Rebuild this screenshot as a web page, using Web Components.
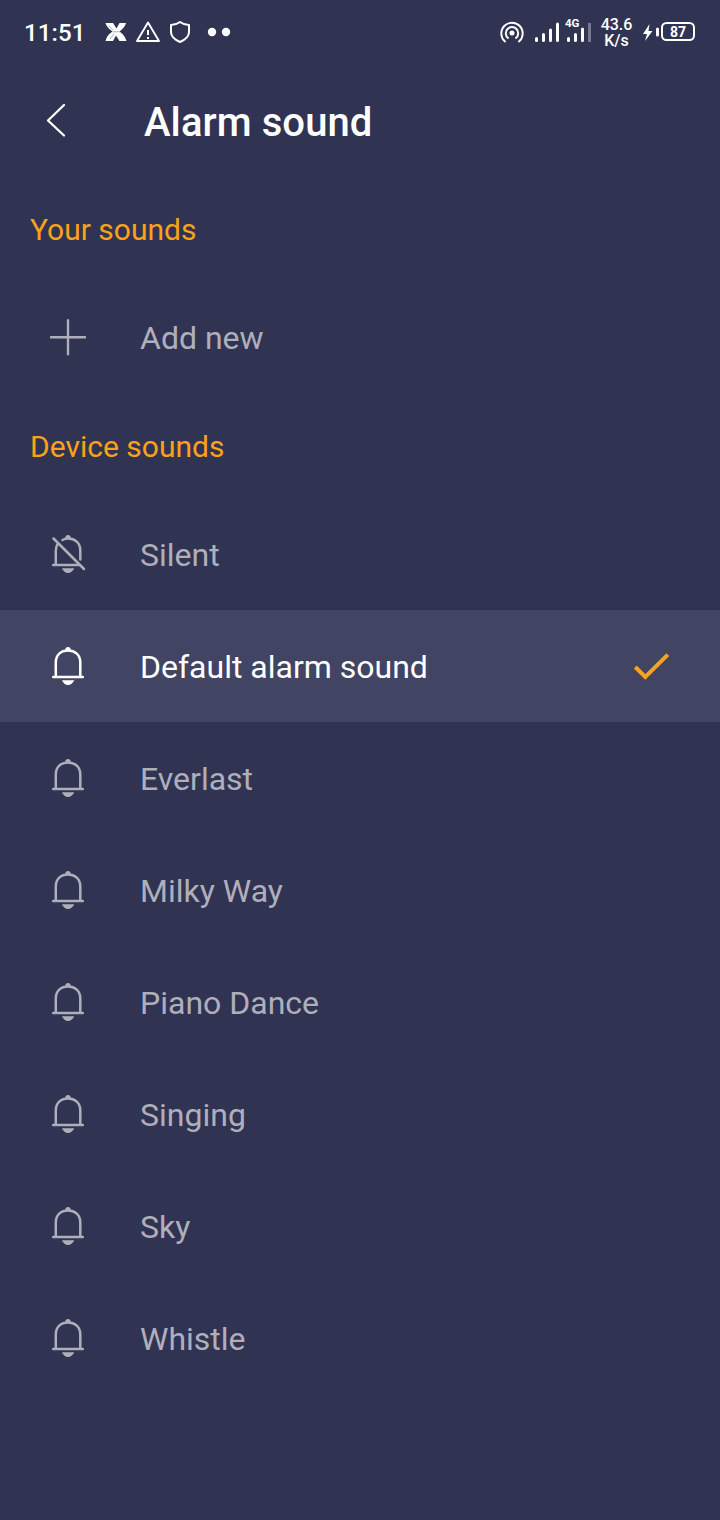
<!DOCTYPE html>
<html lang="en"><head><meta charset="utf-8"><title>Alarm sound</title>
<style>html,body{margin:0;background:#313353}body{width:720px;height:1520px;overflow:hidden;font-family:Roboto,sans-serif}</style></head>
<body><alarm-screen></alarm-screen>
<script>
const define=(name,html)=>customElements.define(name,class extends HTMLElement{
  constructor(){super();this.attachShadow({mode:'open'}).innerHTML=html;}
});
define('status-bar',`<style>
:host{display:flex;height:64px;color:#fff;box-sizing:border-box;padding-left:24px;align-items:flex-start;white-space:nowrap}
svg{display:block;flex:none}
.time{width:72px;font:500 24px/28px Roboto,sans-serif;letter-spacing:.1px;margin-top:19px}
.notes{width:150px;margin-top:8px}.signal{margin-left:244px;margin-top:8px;width:75px}
.net{margin-top:8px;position:relative}
.g{position:absolute;left:0;top:9px;font:700 11.5px/12px Roboto,sans-serif}
.speed{width:52px;text-align:center;font:500 16px/16px Roboto,sans-serif;margin-top:17px;margin-left:-1.500px}
.power{width:78px;margin-top:8px;position:relative;margin-left:-2.500px}
.pct{position:absolute;left:22px;width:32px;text-align:center;top:16px;font:700 14px/16px Roboto,sans-serif}
</style>
<span class="time">11:51</span>
<svg class="notes" width="150" height="50" viewBox="0 0 150 50" fill="none" stroke="#fff">
<path d="M9.500 15h7.500l3.500 5.500 3-5.500h6.500q-1 4.500-6.500 8.500 5.500 4 7 9.500h-7l-3.500-5.500-3 5.500H9.500q1-5.500 7-9.500-6-4-7-8.500z" fill="#fff" stroke="none"/>
<path d="M13 18l4 4M14 31l4-5M16.500 23.800h7" stroke="#777991" stroke-width=".6"/>
<path d="M52 14.500L63 33H41Z" stroke-width="1.900" stroke-linejoin="round"/><path d="M52 22v5M52 29v2" stroke-width="2"/>
<path d="M84 14q4 3 9 3v7q0 6-9 10-9-4-9-10v-7q5 0 9-3z" stroke-width="2" stroke-linejoin="round"/>
<circle cx="116" cy="24" r="4.200" fill="#fff" stroke="none"/><circle cx="130" cy="24" r="4.200" fill="#fff" stroke="none"/></svg>
<svg class="signal" width="75" height="50" viewBox="0 0 75 50" fill="none" stroke="#fff" stroke-linecap="round">
<g stroke-width="1.900"><path d="M15 33.500A10.700 10.700 0 1 1 29 33.500"/><path d="M18 30A6.200 6.200 0 1 1 26 30"/></g><circle cx="22" cy="25" r="2.500" fill="#fff" stroke="none"/>
<path d="M46.500 32.500v-2M53.500 32.500v-6M60.500 32.500V22M67.500 32.500V16" stroke-width="3"/></svg>
<div class="net"><span class="g">4G</span><svg width="27" height="50" viewBox="0 0 27 50" stroke="#fff" stroke-width="3" stroke-linecap="round"><path d="M3.500 32.500v-2M10.500 32.500v-6M17.500 32.500V21"/><path d="M24.500 34V15" stroke="#777991" stroke-linecap="butt"/></svg></div>
<div class="speed">43.6<br>K/s</div>
<div class="power"><svg width="78" height="50" viewBox="0 0 78 50"><path d="M9.500 16L3 26h4l-2 7 7.500-10H8.500z" fill="#fff"/><path d="M17.500 21v6" stroke="#fff" stroke-width="3" stroke-linecap="round"/><rect x="22" y="15" width="32" height="17" rx="4.500" fill="none" stroke="#fff" stroke-width="2"/></svg><span class="pct">87</span></div>`);
define('page-header',`<style>:host{display:flex;height:112px;color:#fff}svg{display:block;width:144px;height:112px;flex:none}
h1{margin:35px 0 0;font:500 40px/47px Roboto,sans-serif;letter-spacing:.08px;white-space:nowrap}</style>
<svg viewBox="0 0 144 112" fill="none" stroke="#fff" stroke-width="2.300" stroke-linecap="round" stroke-linejoin="round"><path d="M64 41L48 56.500 64 71.500"/></svg><h1><slot></slot></h1>`);
define('sound-section',`<style>:host{display:block}h2{height:105px;box-sizing:border-box;margin:0;padding:36px 30px 0;color:#faa219;font:400 30px/36px Roboto,sans-serif;white-space:nowrap}</style><h2><slot name="title"></slot></h2><slot></slot>`);
const clapper=`<path d="M22 44.300H34.300Q32 49 28 49T22 44.300Z M25.500 14.500V12.300Q28 9.500 30.500 12.300V14.500Z" fill="currentColor" stroke="none"/>`;
const icons={
 bell:`<path d="M15.800 40.500V26.500C15.800 18.800 21 14.500 28 14.500S40.300 18.800 40.300 26.500V40.500M13.200 41H42.800"/>${clapper}`,
 plus:`<path d="M11 30.200H45M28 13.200V47.200" stroke-width="2.400"/>`,
 silent:`<path d="M15.800 40.500V26.500Q15.800 22.500 18 19.500M22.500 16Q25 14.500 28 14.500C35 14.500 40.300 18.800 40.300 26.500V35.500M13.200 41H39.500"/>${clapper}<path d="M13.500 14.500L44 45"/>`};
customElements.define('sound-row',class extends HTMLElement{
 constructor(){super();this.attachShadow({mode:'open'});}
 connectedCallback(){this.shadowRoot.innerHTML=`<style>
:host{display:flex;height:112px;box-sizing:border-box;padding:0 40px;align-items:center;color:#afafbc;font:400 32px/38px Roboto,sans-serif;white-space:nowrap}
:host([selected]){background:#424463;color:#fff}svg{display:block;flex:none}.icon{margin-right:40px}.label{flex:1;padding-top:2px}.check{width:60px;height:60px}
</style><svg class="icon" width="60" height="60" viewBox="0 0 60 60" fill="none" stroke="currentColor" stroke-width="2.500" stroke-linecap="round">${icons[this.getAttribute('icon')||'bell']}</svg><span class="label"><slot></slot></span>${this.hasAttribute('selected')?'<svg class="check" viewBox="0 0 60 60" fill="none" stroke="#faa219" stroke-width="4"><path d="M15.300 31L25.300 41 47.800 18.700"/></svg>':''}`;}
});
define('alarm-screen',`<style>:host{display:block;width:720px;height:1520px;background:#313353}</style>
<status-bar></status-bar><page-header>Alarm sound</page-header>
<sound-section><span slot="title">Your sounds</span><sound-row icon="plus">Add new</sound-row></sound-section>
<sound-section><span slot="title">Device sounds</span><sound-row icon="silent">Silent</sound-row><sound-row selected>Default alarm sound</sound-row><sound-row>Everlast</sound-row><sound-row>Milky Way</sound-row><sound-row>Piano Dance</sound-row><sound-row>Singing</sound-row><sound-row>Sky</sound-row><sound-row>Whistle</sound-row></sound-section>`);
</script></body></html>
